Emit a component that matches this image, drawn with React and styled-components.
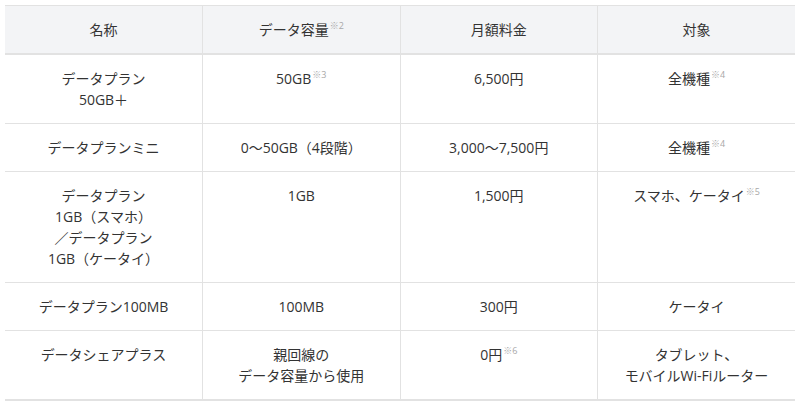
import React from "react";
import styled, { createGlobalStyle } from "styled-components";

const Global = createGlobalStyle`
  html, body { margin: 0; padding: 0; background: #ffffff; }
  body { font-family: "Open Sans", "Noto Sans CJK JP", sans-serif; color: #333333; }
`;

const Wrap = styled.div`
  padding: 5px;
`;

const Table = styled.table`
  width: 790px;
  border-collapse: collapse;
  table-layout: fixed;
  font-size: 14px;
  line-height: 21px;
  border-top: 1px solid #e2e2e2;
  border-bottom: 2px solid #e2e2e2;
`;

const Th = styled.th`
  background: #f3f4f6;
  font-weight: 400;
  padding: 13px 8px;
  text-align: center;
  vertical-align: middle;
  border-bottom: 2px solid #e2e2e2;
  border-left: 1px solid #e2e2e2;
  &:first-child { border-left: none; }
`;

const Td = styled.td`
  padding: 13px 8px;
  text-align: center;
  vertical-align: top;
  border-top: 1px solid #e2e2e2;
  border-left: 1px solid #e2e2e2;
  &:first-child { border-left: none; }
`;

const Note = styled.sup`
  font-size: 9px;
  line-height: 0;
  color: #a8a8a8;
  vertical-align: 6px;
  margin-left: 1px;
`;

const rows = [
  [
    <>データプラン<br />50GB＋</>,
    <>50GB<Note>※3</Note></>,
    "6,500円",
    <>全機種<Note>※4</Note></>,
  ],
  [
    "データプランミニ",
    "0〜50GB（4段階）",
    "3,000〜7,500円",
    <>全機種<Note>※4</Note></>,
  ],
  [
    <>データプラン<br />1GB（スマホ）<br />／データプラン<br />1GB（ケータイ）</>,
    "1GB",
    "1,500円",
    <>スマホ、ケータイ<Note>※5</Note></>,
  ],
  ["データプラン100MB", "100MB", "300円", "ケータイ"],
  [
    "データシェアプラス",
    <>親回線の<br />データ容量から使用</>,
    <>0円<Note>※6</Note></>,
    <>タブレット、<br />モバイルWi-Fiルーター</>,
  ],
];

export default function App() {
  return (
    <>
      <Global />
      <Wrap>
        <Table>
          <thead>
            <tr>
              <Th>名称</Th>
              <Th>データ容量<Note>※2</Note></Th>
              <Th>月額料金</Th>
              <Th>対象</Th>
            </tr>
          </thead>
          <tbody>
            {rows.map((r, i) => (
              <tr key={i}>
                {r.map((c, j) => (
                  <Td key={j}>{c}</Td>
                ))}
              </tr>
            ))}
          </tbody>
        </Table>
      </Wrap>
    </>
  );
}
